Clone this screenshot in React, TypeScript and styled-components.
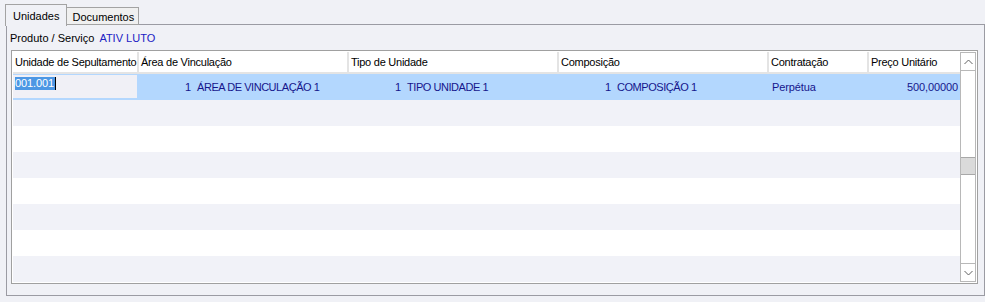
import styled, { createGlobalStyle } from "styled-components";

const GlobalStyle = createGlobalStyle`
  html, body {
    margin: 0;
    padding: 0;
    background: #f0f1f6;
  }
  body {
    font-family: "Liberation Sans", Arial, sans-serif;
    font-size: 11px;
    color: #000;
  }
`;

const Window = styled.div`
  width: 985px;
  height: 302px;
  overflow: hidden;
  background: #f0f1f6;
`;

const TabStrip = styled.div`
  display: flex;
  align-items: flex-end;
  height: 25px;
  padding-left: 5px;
  position: relative;
  z-index: 1;
`;

const Tab = styled.div<{ $active?: boolean }>`
  box-sizing: border-box;
  display: flex;
  align-items: center;
  padding: ${(p) => (p.$active ? "0 7px" : "1px 4px 0 5px")};
  height: ${(p) => (p.$active ? 22 : 18)}px;
  margin-bottom: ${(p) => (p.$active ? -1 : 0)}px;
  border: 1px solid #a3a3a3;
  border-bottom: ${(p) => (p.$active ? "none" : "1px solid #a3a3a3")};
  margin-left: ${(p) => (p.$active ? 0 : -1)}px;
  background: ${(p) => (p.$active ? "#f0f1f6" : "#f0f0f0")};
`;

const Panel = styled.div`
  box-sizing: border-box;
  margin-left: 6px;
  width: 979px;
  height: 272px;
  margin-top: -1px;
  border: 1px solid #9b9ba3;
  padding: 0 0 0 4px;
  display: flex;
  flex-direction: column;
`;

const FieldRow = styled.div`
  height: 25px;
  display: flex;
  align-items: center;
  gap: 5px;
  margin-left: -1px;
`;

const FieldValue = styled.span`
  color: #2121c4;
`;

const Grid = styled.div`
  box-sizing: border-box;
  width: 967px;
  height: 234px;
  border: 1px solid #a0a0a0;
  padding: 1px;
  display: flex;
  background: #ffffff;
  letter-spacing: -0.1px;
`;

const Body = styled.div`
  width: 947px;
  flex-shrink: 0;
  display: flex;
  flex-direction: column;
`;

const Row = styled.div<{ $alt?: boolean; $selected?: boolean }>`
  display: grid;
  grid-template-columns: 126px 210px 210px 210px 100px 91px;
  height: 26px;
  background: ${(p) => (p.$selected ? "#b3d7fe" : p.$alt ? "#f1f2f8" : "#ffffff")};
  color: #15158c;
`;

const HeaderRow = styled(Row)`
  height: 22px;
  background: #ffffff;
  color: #000;
`;

const HeadCell = styled.div`
  box-sizing: border-box;
  display: flex;
  align-items: center;
  padding-left: 2px;
  letter-spacing: -0.25px;
  border-right: 2px solid #e4e4e4;
  border-bottom: 2px solid #e4e4e4;
  white-space: nowrap;
  overflow: hidden;
  &:last-child {
    border-right: none;
  }
`;

const Cell = styled.div<{ $right?: boolean }>`
  display: flex;
  align-items: center;
  justify-content: ${(p) => (p.$right ? "flex-end" : "flex-start")};
  padding: ${(p) => (p.$right ? "0 2px 0 0" : "0 3px")};
  white-space: nowrap;
  overflow: hidden;
`;

const Code = styled.span`
  width: 49px;
  text-align: right;
  margin-right: 6px;
`;

const Name = styled.span`
  letter-spacing: -0.45px;
`;

const EditBox = styled.div`
  box-sizing: border-box;
  margin: 1px 2px 2px 0;
  background: #f0f0f6;
  padding: 2px 0 0 2px;
  display: flex;
  align-items: flex-start;
`;

const Selected = styled.span`
  background: #4c97e4;
  color: #ffffff;
  line-height: 13px;
  padding-right: 1px;
  border-right: 1px solid #000;
`;

const ScrollBar = styled.div`
  box-sizing: border-box;
  width: 16px;
  flex-shrink: 0;
  border: 1px solid #b8b8b8;
  background: #ffffff;
  display: flex;
  flex-direction: column;
`;

const ArrowButton = styled.div<{ $down?: boolean }>`
  height: 17px;
  display: flex;
  align-items: center;
  justify-content: center;
  border-${(p) => (p.$down ? "top" : "bottom")}: 1px solid #b8b8b8;
`;

const Track = styled.div`
  flex: 1;
`;

const Thumb = styled.div`
  box-sizing: border-box;
  height: 18px;
  margin-top: 86px;
  background: #dadada;
  border-top: 1px solid #a8a8a8;
  border-bottom: 1px solid #a8a8a8;
`;

const Chevron = ({ down }: { down?: boolean }) => (
  <svg width="9" height="6" viewBox="0 0 9 6">
    <path
      d={down ? "M0.5 1 L4.5 5 L8.5 1" : "M0.5 5 L4.5 1 L8.5 5"}
      fill="none"
      stroke="#606060"
      strokeWidth="1"
    />
  </svg>
);

const columns = [
  "Unidade de Sepultamento",
  "Área de Vinculação",
  "Tipo de Unidade",
  "Composição",
  "Contratação",
  "Preço Unitário",
];

export default function App() {
  const empty = [1, 2, 3, 4, 5, 6, 7];

  return (
    <Window>
      <GlobalStyle />
      <TabStrip>
        <Tab $active>Unidades</Tab>
        <Tab>Documentos</Tab>
      </TabStrip>
      <Panel>
        <FieldRow>
          <span>Produto / Serviço</span>
          <FieldValue>ATIV LUTO</FieldValue>
        </FieldRow>
        <Grid>
          <Body>
            <HeaderRow>
              {columns.map((c) => (
                <HeadCell key={c}>{c}</HeadCell>
              ))}
            </HeaderRow>
            <Row $selected>
              <EditBox>
                <Selected>001.001</Selected>
              </EditBox>
              <Cell>
                <Code>1</Code>
                <Name>ÁREA DE VINCULAÇÃO 1</Name>
              </Cell>
              <Cell>
                <Code>1</Code>
                <Name>TIPO UNIDADE 1</Name>
              </Cell>
              <Cell>
                <Code>1</Code>
                <Name>COMPOSIÇÃO 1</Name>
              </Cell>
              <Cell>Perpétua</Cell>
              <Cell $right>500,00000</Cell>
            </Row>
            {empty.map((i) => (
              <Row key={i} $alt={i % 2 === 1} />
            ))}
          </Body>
          <ScrollBar>
            <ArrowButton>
              <Chevron />
            </ArrowButton>
            <Track>
              <Thumb />
            </Track>
            <ArrowButton $down>
              <Chevron down />
            </ArrowButton>
          </ScrollBar>
        </Grid>
      </Panel>
    </Window>
  );
}
